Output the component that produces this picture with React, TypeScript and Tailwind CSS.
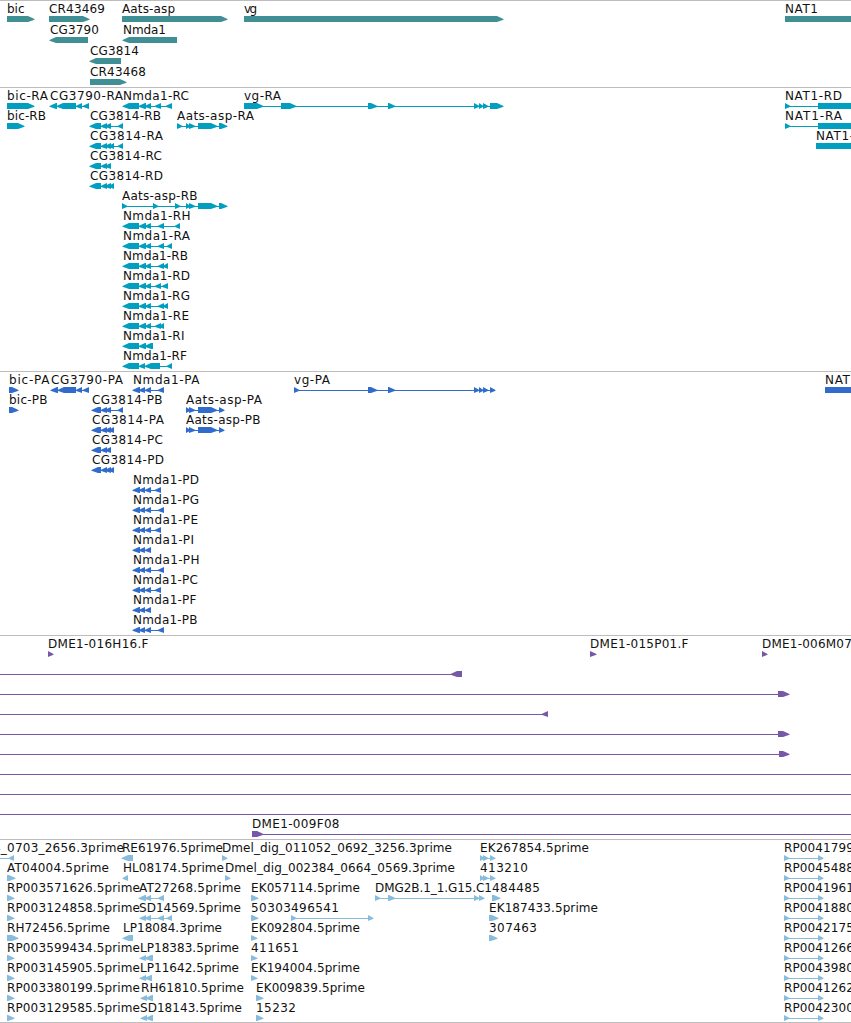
type Span = [number, number]

// label, its start and end, strand and exons, all in canvas units
type Feature = {
  row: number
  label?: string
  from?: number
  to?: number
  dir: 1 | -1
  spans: Span[]
  line?: Span
}

type Track = {
  id: string
  color: string
  rows: number
  rowHeight: number
  features: Feature[]
}

const WIDTH = 851

const f = (
  row: number,
  label: string,
  from: number,
  to: number,
  dir: 1 | -1,
  spans: Span[],
  line?: Span,
): Feature => ({ row, label, from, to, dir, spans, line })

const bare = (row: number, dir: 1 | -1, spans: Span[], line: Span): Feature => ({ row, dir, spans, line })

const genes: Feature[] = [
  f(0, 'bic', 7, 24.5, 1, [[7, 34]]),
  f(0, 'CR43469', 49, 105, 1, [[49, 89]]),
  f(0, 'Aats-asp', 122, 175, 1, [[122, 227]]),
  f(0, 'vg', 244, 257, 1, [[244, 503]]),
  f(0, 'NAT1', 785, 818, 1, [[785, 900]]),
  f(1, 'CG3790', 50, 99, -1, [[50, 88]]),
  f(1, 'Nmda1', 123, 166, -1, [[123, 177]]),
  f(2, 'CG3814', 90, 139, -1, [[90, 121]]),
  f(3, 'CR43468', 90, 146, 1, [[90, 126]]),
]

const nmdaR: Span[] = [[123, 139], [139, 146], [145, 151]]
const aatsR: Span[] = [[186, 190], [189, 195], [198, 217], [219, 227]]
const cgR: Span[] = [[90, 101], [101, 107], [105, 111]]

const transcripts: Feature[] = [
  f(0, 'bic-RA', 7, 48, 1, [[7, 34]]),
  f(0, 'CG3790-RA', 50, 123, -1, [[50, 57], [57, 76], [76, 82], [83, 89]]),
  f(0, 'Nmda1-RC', 123, 189, -1, [...nmdaR, [155, 161], [166, 172]]),
  f(0, 'vg-RA', 244, 281, 1, [[244, 263], [281, 296], [368, 377], [388, 395], [474, 479], [479, 483], [483, 488], [490, 503]]),
  f(0, 'NAT1-RD', 785, 842, 1, [[785, 790], [818, 900]]),
  f(1, 'bic-RB', 7, 46, 1, [[7, 24]]),
  f(1, 'CG3814-RB', 90, 161, -1, [...cgR, [118, 123]]),
  f(1, 'Aats-asp-RA', 177, 254, 1, [[177, 182], ...aatsR]),
  f(1, 'NAT1-RA', 785, 842, 1, [[785, 790], [818, 900]]),
  f(2, 'CG3814-RA', 90, 163, -1, [...cgR, [109, 114], [118, 123]]),
  f(2, 'NAT1-RB', 816, 872, 1, [[816, 900]]),
  f(3, 'CG3814-RC', 90, 162, -1, cgR),
  f(4, 'CG3814-RD', 90, 163, -1, [...cgR, [109, 114]]),
  f(5, 'Aats-asp-RB', 122, 197.5, 1, [[122, 127], [153, 158], [175, 180], ...aatsR]),
  f(6, 'Nmda1-RH', 123, 190.5, -1, [...nmdaR, [158, 164], [175, 180]]),
  f(7, 'Nmda1-RA', 123, 190, -1, [...nmdaR, [158, 164], [167, 172]]),
  f(8, 'Nmda1-RB', 123, 188, -1, [...nmdaR, [158, 164], [163, 168]]),
  f(9, 'Nmda1-RD', 123, 190, -1, [...nmdaR, [155, 161], [162, 168]]),
  f(10, 'Nmda1-RG', 123, 190, -1, [...nmdaR, [158, 164], [163, 168]]),
  f(11, 'Nmda1-RE', 123, 189, -1, [...nmdaR, [155, 161], [159, 164]]),
  f(12, 'Nmda1-RI', 123, 184.5, -1, [[123, 139], [139, 146], [145, 153]]),
  f(13, 'Nmda1-RF', 123, 187, -1, [[123, 139], [139, 145], [145, 160], [167, 172]]),
]

const nmdaP: Span[] = [[133, 140], [139, 145], [145, 151]]
const aatsP: Span[] = [[186, 190], [189, 195], [198, 217], [219, 224]]
const cgP: Span[] = [[92, 101], [101, 107], [105, 111]]

const proteins: Feature[] = [
  f(0, 'bic-PA', 9, 49.5, 1, [[9, 18]]),
  f(0, 'CG3790-PA', 51, 123, -1, [[51, 58], [58, 76], [76, 82], [83, 89]]),
  f(0, 'Nmda1-PA', 133, 199.5, -1, [...nmdaP, [158, 164]]),
  f(0, 'vg-PA', 294, 330, 1, [[294, 299], [368, 377], [388, 395], [474, 479], [479, 483], [483, 488], [490, 495]]),
  f(0, 'NAT1-PD', 825, 881, 1, [[825, 900]]),
  f(1, 'bic-PB', 9, 47.5, 1, [[9, 18]]),
  f(1, 'CG3814-PB', 92, 162.5, -1, [...cgP, [118, 123]]),
  f(1, 'Aats-asp-PA', 186, 262, 1, aatsP),
  f(2, 'CG3814-PA', 92, 164, -1, [...cgP, [109, 114]]),
  f(2, 'Aats-asp-PB', 186, 260.5, 1, aatsP),
  f(3, 'CG3814-PC', 92, 163, -1, cgP),
  f(4, 'CG3814-PD', 92, 164, -1, [...cgP, [109, 114]]),
  f(5, 'Nmda1-PD', 133, 199, -1, [...nmdaP, [155, 161]]),
  f(6, 'Nmda1-PG', 133, 199, -1, [...nmdaP, [158, 164]]),
  f(7, 'Nmda1-PE', 133, 198, -1, [...nmdaP, [155, 161]]),
  f(8, 'Nmda1-PI', 133, 194, -1, nmdaP),
  f(9, 'Nmda1-PH', 133, 199.5, -1, [...nmdaP, [158, 164]]),
  f(10, 'Nmda1-PC', 133, 198, -1, [...nmdaP, [155, 161]]),
  f(11, 'Nmda1-PF', 133, 196.5, -1, nmdaP),
  f(12, 'Nmda1-PB', 133, 197.5, -1, [...nmdaP, [158, 164]]),
]

const clones: Feature[] = [
  f(0, 'DME1-016H16.F', 48, 148.5, 1, [[48, 53]]),
  f(0, 'DME1-015P01.F', 590, 688.5, 1, [[590, 596]]),
  f(0, 'DME1-006M07.F', 762, 863, 1, [[762, 767]]),
  bare(1, -1, [[451, 462]], [0, 462]),
  bare(2, 1, [[778, 789]], [0, 789]),
  bare(3, -1, [[542, 548]], [0, 548]),
  bare(4, 1, [[778, 789]], [0, 789]),
  bare(5, 1, [[779, 789]], [0, 789]),
  bare(6, 1, [], [0, WIDTH]),
  bare(7, 1, [], [0, WIDTH]),
  bare(8, 1, [], [0, WIDTH]),
  f(9, 'DME1-009F08', 252, 339.5, 1, [[252, 263]], [252, WIDTH]),
]

const rp: Span[] = [[784, 789], [818, 823]]
const ek: Span[] = [[480, 484], [483, 488], [490, 495]]

const ests: Feature[] = [
  f(0, '4_0703_2656.3prime', -7, 124, -1, [[9, 14]], [0, 14]),
  f(0, 'RE61976.5prime', 122, 223, -1, [[122, 133]]),
  f(0, 'Dmel_dig_011052_0692_3256.3prime', 222, 452, 1, [[222, 227]]),
  f(0, 'EK267854.5prime', 480, 589, 1, ek),
  f(0, 'RP0041799', 784, 854, 1, rp),
  f(1, 'AT04004.5prime', 7, 109, 1, [[7, 15]]),
  f(1, 'HL08174.5prime', 123, 224, -1, [[123, 128]]),
  f(1, 'Dmel_dig_002384_0664_0569.3prime', 225, 455, 1, [[225, 230]]),
  f(1, '413210', 480, 528, 1, ek),
  f(1, 'RP0045488', 784, 854, 1, rp),
  f(2, 'RP003571626.5prime', 7, 140, 1, [[7, 14]]),
  f(2, 'AT27268.5prime', 139, 241, -1, [[139, 146], [145, 151], [158, 164]]),
  f(2, 'EK057114.5prime', 251, 360, 1, [[251, 258]]),
  f(2, 'DMG2B.1_1.G15.C1', 375, 492, 1, [[375, 380], [388, 395], [474, 479], [479, 484]]),
  f(2, '484485', 492, 540, 1, [[492, 500]]),
  f(2, 'RP0041961', 784, 854, 1, rp),
  f(3, 'RP003124858.5prime', 7, 140, 1, [[7, 14]]),
  f(3, 'SD14569.5prime', 139, 241, -1, [[140, 146], [145, 151], [158, 164], [167, 172]]),
  f(3, '50303', 251, 291, 1, [[251, 258]]),
  f(3, '496541', 291, 339, 1, [[291, 296], [368, 373]]),
  f(3, 'EK187433.5prime', 489, 598, 1, [[489, 498]]),
  f(3, 'RP0041880', 784, 854, 1, rp),
  f(4, 'RH72456.5prime', 7, 110, 1, [[7, 18]]),
  f(4, 'LP18084.3prime', 123, 222, -1, [[123, 133]]),
  f(4, 'EK092804.5prime', 251, 360, 1, [[251, 257]]),
  f(4, '307463', 489, 537, 1, [[489, 497]]),
  f(4, 'RP0042175', 784, 854, 1, rp),
  f(5, 'RP003599434.5prime', 7, 140, 1, [[7, 14]]),
  f(5, 'LP18383.5prime', 140, 239, -1, [[140, 146], [145, 153]]),
  f(5, '411651', 251, 299, 1, [[251, 257]]),
  f(5, 'RP0041266', 784, 854, 1, rp),
  f(6, 'RP003145905.5prime', 7, 140, 1, [[7, 14]]),
  f(6, 'LP11642.5prime', 140, 239, -1, [[140, 146], [145, 152]]),
  f(6, 'EK194004.5prime', 251, 360, 1, [[251, 257]]),
  f(6, 'RP0043980', 784, 854, 1, rp),
  f(7, 'RP003380199.5prime', 7, 140, 1, [[7, 14]]),
  f(7, 'RH61810.5prime', 141, 244, -1, [[141, 147], [146, 153]]),
  f(7, 'EK009839.5prime', 256, 365, 1, [[256, 263]]),
  f(7, 'RP0041262', 784, 854, 1, rp),
  f(8, 'RP003129585.5prime', 7, 140, 1, [[7, 14]]),
  f(8, 'SD18143.5prime', 140, 242, -1, [[141, 147], [146, 153]]),
  f(8, '15232', 256, 296, 1, [[256, 263]]),
  f(8, 'RP0042300', 784, 854, 1, rp),
]

const tracks: Track[] = [
  { id: 'genes', color: '#3f8f94', rows: 4, rowHeight: 21, features: genes },
  { id: 'transcripts', color: '#009ebf', rows: 14, rowHeight: 20, features: transcripts },
  { id: 'proteins', color: '#316ccc', rows: 13, rowHeight: 20, features: proteins },
  { id: 'clones', color: '#7658a6', rows: 10, rowHeight: 20, features: clones },
  { id: 'ests', color: '#88bcdd', rows: 9, rowHeight: 20, features: ests },
]

function arrow([a, b]: Span, dir: 1 | -1) {
  const head = Math.min(6, b - a)
  const [tail, neck, tip] = dir === 1 ? [a, b - head, b + 0.5] : [b, a + head, a - 0.5]
  return `${tail},15 ${neck},15 ${tip},18 ${tip},18.8 ${neck},21 ${tail},21`
}

function FeatureGlyph({ feature }: { feature: Feature }) {
  const { spans, dir, label, from = 0, to = 0 } = feature
  const line = feature.line ?? (spans.length > 1 ? [spans[0][0], spans[spans.length - 1][1]] : null)

  return (
    <g>
      {line && (
        <rect x={line[0]} y={18} width={line[1] - line[0]} height={1} shapeRendering="crispEdges" />
      )}
      {spans.map((s) => (
        <polygon key={s[0]} points={arrow(s, dir)} />
      ))}
      {label && (
        <text
          x={from}
          y={12}
          textLength={to - from}
          className="fill-[#111] font-['DejaVu_Sans',sans-serif] text-[12px]"
        >
          {label}
        </text>
      )}
    </g>
  )
}

function TrackPanel({ track }: { track: Track }) {
  const rows = Array.from({ length: track.rows }, (_, i) => track.features.filter((x) => x.row === i))
  const compact = track.id === 'genes' || track.id === 'ests'

  return (
    <section className={compact ? 'border-t border-[#bdbdbd] pb-[2px]' : 'border-t border-[#bdbdbd] pb-[3px]'}>
      {rows.map((features, i) => (
        <svg
          key={i}
          width={WIDTH}
          height={track.rowHeight}
          fill={track.color}
          className="block overflow-visible"
        >
          {features.map((x) => (
            <FeatureGlyph key={x.label ?? x.row} feature={x} />
          ))}
        </svg>
      ))}
    </section>
  )
}

export default function App() {
  return (
    <main className="flex h-[1023px] w-[851px] flex-col overflow-hidden border-b border-[#bdbdbd] bg-white">
      {tracks.map((t) => (
        <TrackPanel key={t.id} track={t} />
      ))}
    </main>
  )
}
